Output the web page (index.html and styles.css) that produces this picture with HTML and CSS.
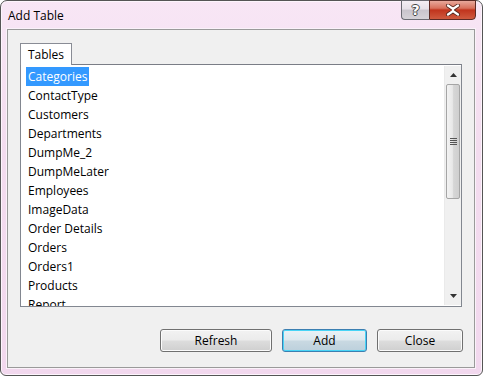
FILE: index.html
```html
<!DOCTYPE html>
<html>
<head>
<meta charset="utf-8">
<link rel="stylesheet" href="styles.css">
</head>
<body>
<div class="window">
  <div class="titlebar">
    <div class="title">Add Table</div>
    <div class="caption">
      <div class="cap help">?</div>
      <div class="cap close">
        <svg width="16" height="12" viewBox="0 0 16 12"><path d="M3 1.5 L8 5 L13 1.5 M3 10.5 L8 7 L13 10.5" fill="none" stroke="#5a2a22" stroke-width="4" stroke-linecap="round"/><path d="M3 1.5 L8 5 L13 1.5 M3 10.5 L8 7 L13 10.5 M8 5 L8 7" fill="none" stroke="#fff" stroke-width="2.2" stroke-linecap="round"/></svg>
      </div>
    </div>
  </div>
  <div class="client">
    <div class="tabs"><div class="tab">Tables</div></div>
    <div class="listbox">
      <ul class="items">
        <li class="sel">Categories</li>
        <li>ContactType</li>
        <li>Customers</li>
        <li>Departments</li>
        <li>DumpMe_2</li>
        <li>DumpMeLater</li>
        <li>Employees</li>
        <li>ImageData</li>
        <li>Order Details</li>
        <li>Orders</li>
        <li>Orders1</li>
        <li>Products</li>
        <li>Report</li>
      </ul>
      <div class="scrollbar">
        <div class="arrow up"><svg width="7" height="4" viewBox="0 0 7 4"><path d="M0 4 L3.5 0 L7 4Z" fill="#333"/></svg></div>
        <div class="thumb"><div class="grip"></div></div>
        <div class="track"></div>
        <div class="arrow down"><svg width="7" height="4" viewBox="0 0 7 4"><path d="M0 0 L3.5 4 L7 0Z" fill="#333"/></svg></div>
      </div>
    </div>
    <div class="buttons">
      <button class="btn refresh">Refresh</button>
      <button class="btn add">Add</button>
      <button class="btn closeb">Close</button>
    </div>
  </div>
</div>
</body>
</html>
```
FILE: styles.css
```css
* { box-sizing: border-box; }
html, body { margin: 0; padding: 0; }
body {
  width: 483px; height: 376px; overflow: hidden;
  font-family: "Open Sans", "Noto Sans", sans-serif;
  font-size: 12px; color: #000;
  background: #fff;
}
.window {
  width: 483px; height: 376px;
  border: 1px solid #555;
  border-radius: 7px 7px 6px 6px;
  background: linear-gradient(180deg, #f8e6f5 0%, #f3dcef 40%, #f2d8ee 100%);
  display: flex; flex-direction: column;
  box-shadow: inset 0 0 0 1px #fdf5fc;
}
.titlebar {
  height: 28px; display: flex; justify-content: space-between; align-items: flex-start;
  padding-left: 7px;
}
.title { padding-top: 6px; font-size: 12px; letter-spacing: 0; }
.caption { display: flex; margin-right: 6px; margin-top: -1px; }
.cap { height: 20px; display: flex; align-items: center; justify-content: center; }
.help {
  width: 28px;
  border: 1px solid #6a6a72; border-right: none;
  border-radius: 0 0 0 4px;
  background: linear-gradient(180deg, #f4eef4 0%, #e6e0e8 45%, #c9c4cc 50%, #d6d2d8 100%);
  color: #fff; font-weight: bold; font-size: 14px;
  text-shadow: -1px 0 #444, 1px 0 #444, 0 -1px #444, 0 1px #444;
  font-family: "DejaVu Sans", sans-serif;
}
.close {
  width: 47px;
  border: 1px solid #5c2a25;
  border-radius: 0 0 4px 0;
  background: linear-gradient(180deg, #e8a89b 0%, #d8705c 40%, #c1341d 50%, #cf5a3f 100%);
}
.client {
  flex: 1;
  margin: 0 7px 7px 6px;
  border: 1px solid #9a9a9a;
  box-shadow: 0 0 0 1px #faf2f9;
  background: #f0f0f0;
  padding: 13px 12px 15px 12px;
  display: flex; flex-direction: column;
}
.tabs { display: flex; height: 21px; position: relative; z-index: 1; }
.tab {
  width: 52px; height: 22px;
  border: 1px solid #898c95; border-bottom: none;
  background: #fff;
  display: flex; align-items: center; justify-content: center;
  padding-bottom: 1px;
}
.listbox {
  height: 243px;
  border: 1px solid #828790;
  border-top-color: #7a7d86;
  background: #fff;
  display: flex;
}
.items {
  list-style: none; margin: 0; padding: 2px 0 0 5px; flex: 1; overflow: hidden;
}
.items li { height: 19px; line-height: 20px; padding-left: 2px; width: max-content; padding-right: 2px; }
.items li.sel { background: #3399ff; color: #fff; }
.scrollbar {
  width: 17px; margin: 1px 0 1px 0;
  background: #f0f0f0;
  border-left: 1px solid #eaeaea;
  display: flex; flex-direction: column;
}
.arrow { height: 18px; display: flex; align-items: center; justify-content: center; }
.thumb {
  height: 115px; margin: 0 1px;
  border: 1px solid #a5a5a5; border-radius: 2px;
  background: linear-gradient(90deg, #f3f3f3 0%, #e8e8e8 45%, #d6d6d6 55%, #cfcfcf 100%);
  display: flex; align-items: center; justify-content: center;
}
.grip {
  width: 7px; height: 7px;
  background: repeating-linear-gradient(180deg, #555 0 1px, transparent 1px 2px);
}
.track { flex: 1; }
.buttons {
  margin-top: 22px; margin-right: -1px;
  display: flex; justify-content: flex-end; gap: 10px;
}
.btn {
  height: 23px;
  font-family: inherit; font-size: 12px; color: #000;
  border: 1px solid #707070; border-radius: 3px;
  background: linear-gradient(180deg, #f2f2f2 0%, #ebebeb 48%, #dddddd 52%, #cfcfcf 100%);
  box-shadow: inset 0 0 0 1px #fbfbfb;
  padding: 0;
}
.refresh { width: 112px; }
.add { width: 85px; border-color: #3c7fb1;
  background: linear-gradient(180deg, #eaf2f6 0%, #dde8ee 48%, #c9d9e2 52%, #bcd0dc 100%);
  box-shadow: inset 0 0 0 1px #48d4f6;
}
.closeb { width: 86px; }
```
